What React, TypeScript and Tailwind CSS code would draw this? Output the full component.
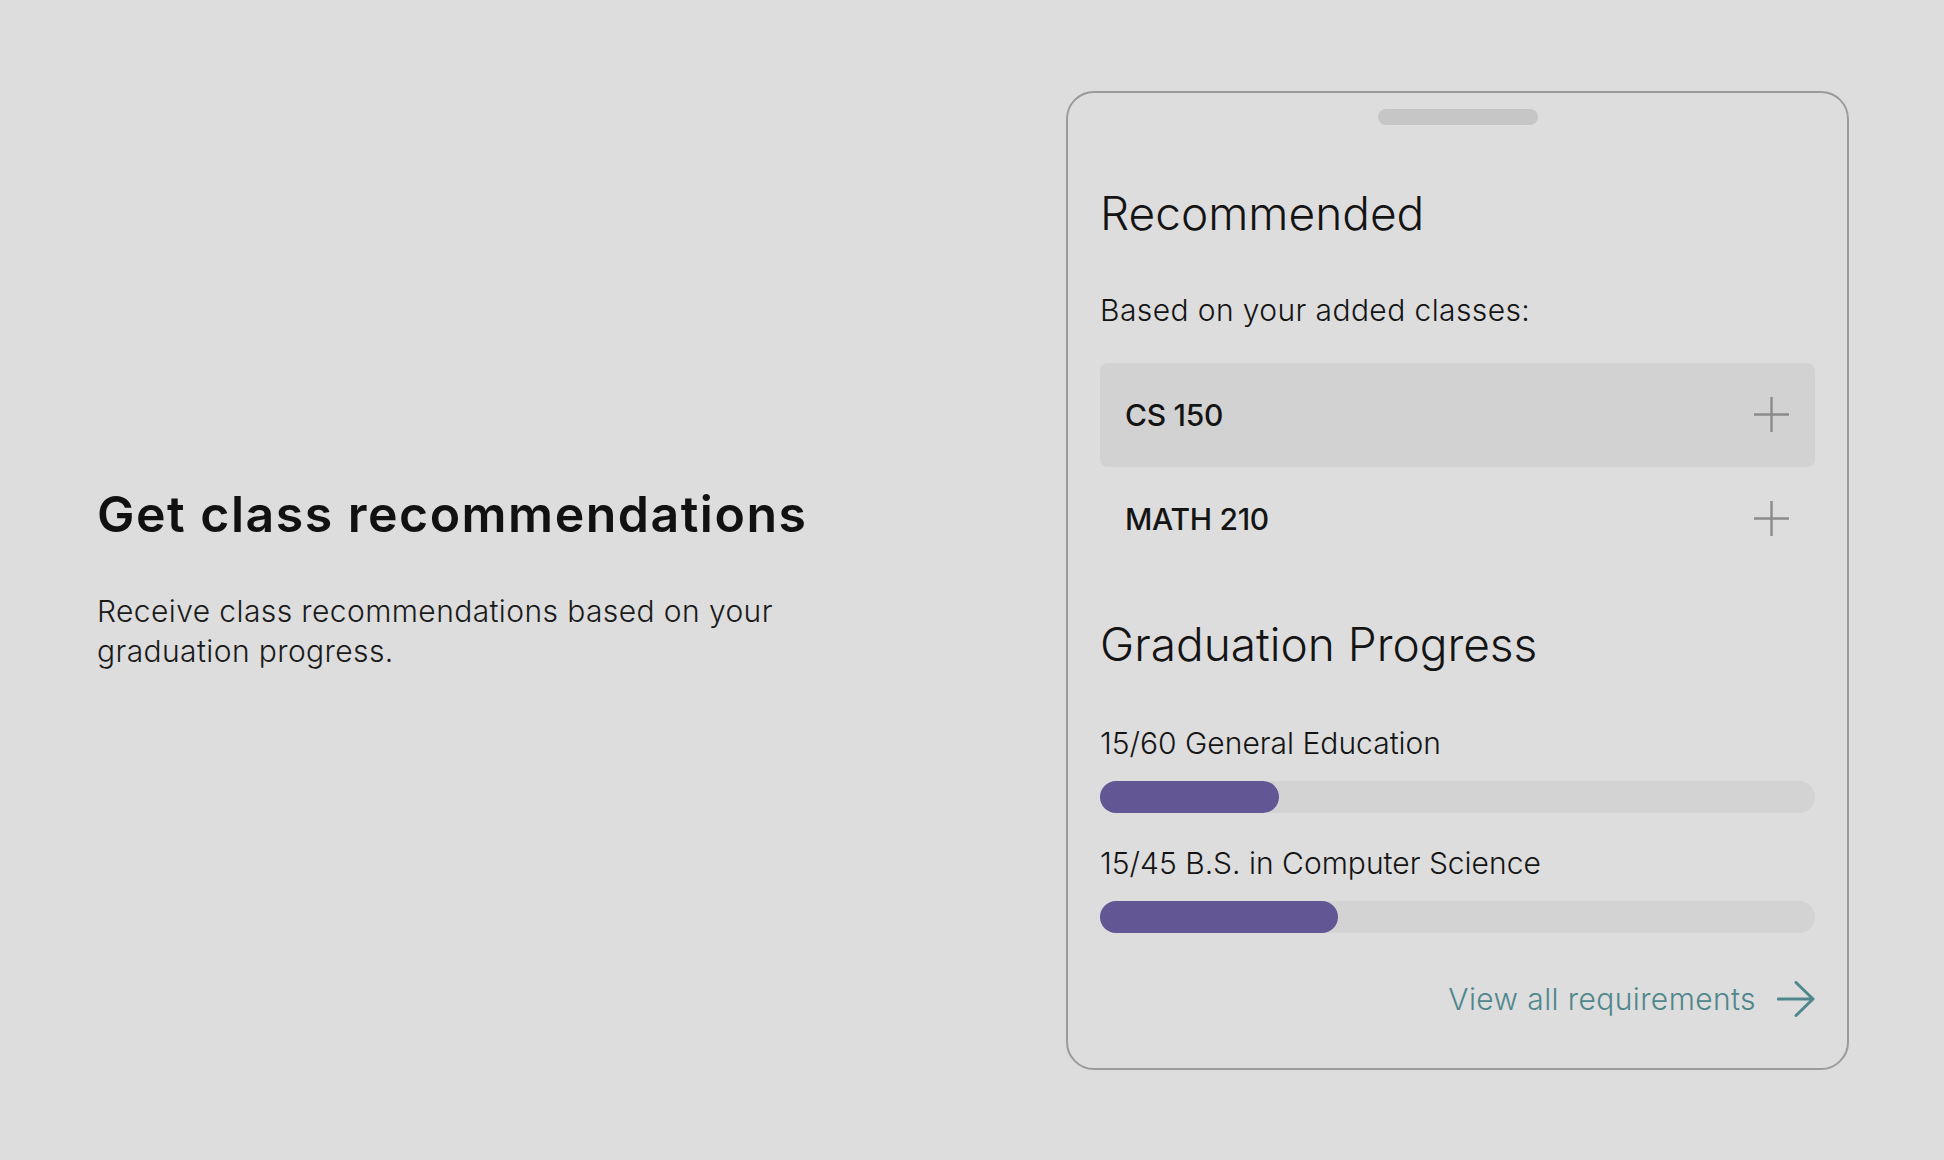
import React from "react";

const font = { fontFamily: "Inter, Lato, 'Open Sans', sans-serif" };

function PlusIcon() {
  return (
    <svg width="35" height="35" viewBox="0 0 35 35" fill="none">
      <path d="M17.5 0v35M0 17.5h35" stroke="#8b8b8b" strokeWidth="2.4" />
    </svg>
  );
}

function ArrowIcon() {
  return (
    <svg width="38" height="36" viewBox="0 0 38 36" fill="none">
      <path d="M1 18h35M19 1.5L36 18 19 34.5" stroke="#4f878c" strokeWidth="3" strokeLinecap="round" strokeLinejoin="round" />
    </svg>
  );
}

const classes = [
  { code: "CS 150", active: true },
  { code: "MATH 210", active: false },
];

const progress = [
  { label: "15/60 General Education", done: 15, total: 60 },
  { label: "15/45 B.S. in Computer Science", done: 15, total: 45 },
];

export default function App() {
  return (
    <div
      className="w-[1944px] h-[1160px] bg-[#dddddd] flex items-center justify-between pl-[97px] pr-[95px] text-[#141414]"
      style={font}
    >
      {/* left copy */}
      <div className="w-[740px] flex flex-col">
        <h1 className="text-[50px] leading-none font-semibold tracking-[1.5px] text-[#111]">Get class recommendations</h1>
        <p className="mt-[52px] w-[700px] text-[30px] leading-[40px] font-light tracking-[0.4px] text-[#1a1a1a]">
          Receive class recommendations based on your graduation progress.
        </p>
      </div>

      {/* card */}
      <div className="w-[783px] h-[979px] border-2 border-[#9b9b9b] rounded-[28px] px-8 flex flex-col">
        <div className="mt-4 self-center w-[160px] h-[16px] rounded-full bg-[#c6c6c6]" />

        <h2 className="mt-[65px] text-[46px] leading-none font-light">Recommended</h2>
        <p className="mt-[59px] text-[30px] leading-none font-light tracking-[0.4px]">Based on your added classes:</p>

        <div className="mt-[38px] flex flex-col">
          {classes.map((c) => (
            <div
              key={c.code}
              className={`h-[104px] flex items-center justify-between pl-[25px] pr-[26px] rounded-lg ${c.active ? "bg-[#d2d2d2]" : ""}`}
            >
              <span className="text-[30px] leading-none font-medium tracking-[-0.3px]">{c.code}</span>
              <PlusIcon />
            </div>
          ))}
        </div>

        <h2 className="mt-[50px] text-[46px] leading-none font-light">Graduation Progress</h2>

        <div className="mt-[61px] flex flex-col gap-[35px]">
          {progress.map((p) => (
            <div key={p.label} className="flex flex-col">
              <span className="text-[30px] leading-none font-light">{p.label}</span>
              <div className="mt-[23px] h-[32px] rounded-full bg-[#d3d3d3]">
                <div
                  className="h-full rounded-full bg-[#625794]"
                  style={{ width: `${(p.done / p.total) * 100}%` }}
                />
              </div>
            </div>
          ))}
        </div>

        <a className="mt-[48px] self-end flex items-center gap-[21px] text-[#4f878c]" href="#">
          <span className="text-[30px] leading-none font-light tracking-[0.4px]">View all requirements</span>
          <ArrowIcon />
        </a>
      </div>
    </div>
  );
}
